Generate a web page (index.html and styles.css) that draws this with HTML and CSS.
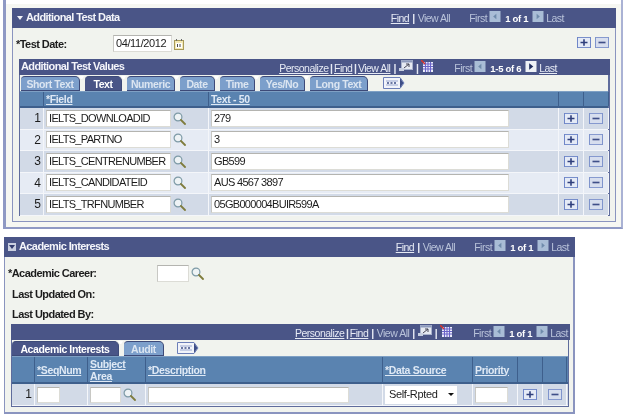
FILE: index.html
```html
<!DOCTYPE html>
<html lang="en">
<head>
<meta charset="utf-8">
<title>Additional Test Data</title>
<link rel="stylesheet" href="styles.css">
</head>
<body>
<svg class="defs" width="0" height="0" aria-hidden="true">
  <symbol id="mag" viewBox="0 0 13 13"><circle cx="5" cy="5" r="3.9" fill="#eef3f5" stroke="#7d9aa6" stroke-width="1.2"/><path d="M8 8l4 4" stroke="#7f7c3c" stroke-width="1.8" stroke-linecap="round"/></symbol>
  <symbol id="plus" viewBox="0 0 14 12" preserveAspectRatio="none"><rect x=".5" y=".5" width="13" height="11" fill="#e4eaf6" stroke="#6f86c8"/><path d="M7 2.500v7M3.500 6h7" stroke="#2f3f7c" stroke-width="1.600"/></symbol>
  <symbol id="minus" viewBox="0 0 14 12" preserveAspectRatio="none"><rect x=".5" y=".5" width="13" height="11" fill="#d7deee" stroke="#7f94cc"/><path d="M3.500 6h7" stroke="#3f4f88" stroke-width="1.800"/></symbol>
  <symbol id="left" viewBox="0 0 12 12"><rect width="12" height="12" fill="#a9bdd6"/><path d="M7.500 3v6L4 6z" fill="#6f8bab"/></symbol>
  <symbol id="right" viewBox="0 0 12 12"><rect width="12" height="12" fill="#a9bdd6"/><path d="M4.500 3v6L8 6z" fill="#6f8bab"/></symbol>
  <symbol id="rightOn" viewBox="0 0 12 12"><rect width="12" height="12" fill="#eef1f6"/><path d="M4 2.500v7L8.500 6z" fill="#1d2a5c"/></symbol>
  <symbol id="zoomwin" viewBox="0 0 14 12"><rect x="2.500" y=".5" width="11" height="9" fill="#e6eaf2" stroke="#a9b3cc"/><rect x="2.500" y=".5" width="11" height="2" fill="#8d9abc"/><path d="M5 8l5-4M7 4h3v3" stroke="#445" fill="none"/><rect y="8" width="5" height="3" fill="#c7cfe0"/></symbol>
  <symbol id="gridicon" viewBox="0 0 12 12"><rect x="2" y="2" width="10" height="10" fill="#eef0fa"/><path d="M2 4h10M2 6.500h10M2 9h10M4.500 2v10M7 2v10M9.500 2v10" stroke="#6a63c8" stroke-width="1.100"/><path d="M0 0l4 4" stroke="#d8342c" stroke-width="1.500"/></symbol>
  <symbol id="more" viewBox="0 0 23 12"><path d="M1.500.5H18l4 5.500-4 5.500H1.500z" fill="#f2f4fa" stroke="#6c7fb8"/><path d="M18 1l3.500 5-3.500 5z" fill="#3d4d86"/><path d="M4 4h12M4 8h12" stroke="#9aa8d0"/><path d="M5 6h2M8.500 6h2M12 6h2" stroke="#3d4d86" stroke-width="1.500"/></symbol>
  <symbol id="cal" viewBox="0 0 10 11"><rect x=".5" y="1.500" width="9" height="9" fill="#f4e9b4" stroke="#a89a58"/><rect x="2" y="4" width="6" height="5" fill="#fff"/><path d="M3.500 5v3M6 5v3" stroke="#4a4a4a"/><path d="M2.500 0v2M7.500 0v2" stroke="#6a6a6a"/></symbol>
</svg>

<div class="frame">
  <div class="frame-inner">
    <section class="panel panel-a">
      <header class="bar">
        <span class="arrow-down"></span>
        <h2 class="bar-title">Additional Test Data</h2>
        <nav class="nav nav-a">
          <a class="link">Find</a><span class="pipe">|</span><span class="dim">View All</span>
          <span class="dim first">First</span><svg class="nb"><use href="#left"/></svg><b class="count">1 of 1</b><svg class="nb"><use href="#right"/></svg><span class="dim">Last</span>
        </nav>
      </header>
      <div class="panel-body body-a">
        <div class="date-row">
          <label class="lbl lbl-date">*Test Date:</label>
          <div class="inp inp-date">04/11/2012</div>
          <svg class="cal"><use href="#cal"/></svg>
          <div class="row-btns top-btns"><svg class="btn"><use href="#plus"/></svg><svg class="btn"><use href="#minus"/></svg></div>
        </div>
        <div class="grid grid-a">
          <div class="grid-bar">
            <h3 class="grid-title">Additional Test Values</h3>
            <nav class="nav nav-ga">
              <a class="link">Personalize</a><span class="pipe tight">|</span><a class="link">Find</a><span class="pipe tight">|</span><a class="link">View All</a><span class="pipe">|</span><svg class="zw"><use href="#zoomwin"/></svg><span class="pipe">|</span><svg class="gi"><use href="#gridicon"/></svg>
              <span class="dim first-g">First</span><svg class="nb"><use href="#left"/></svg><b class="count">1-5 of 6</b><svg class="nb"><use href="#rightOn"/></svg><a class="link">Last</a>
            </nav>
          </div>
          <div class="tabs tabs-a">
            <div class="tab w-short">Short Text</div>
            <div class="tab on w-text">Text</div>
            <div class="tab w-num">Numeric</div>
            <div class="tab w-date">Date</div>
            <div class="tab w-time">Time</div>
            <div class="tab w-yes">Yes/No</div>
            <div class="tab last w-long">Long Text</div>
            <svg class="more more-a"><use href="#more"/></svg>
          </div>
          <div class="cols cols-a head head-a">
            <div class="hc"></div><div class="hc"><a class="hl">*Field</a></div><div class="hc"><a class="hl">Text - 50</a></div><div class="hc"></div><div class="hc"></div>
          </div>
          <div class="cols cols-a row odd">
            <div class="c num">1</div><div class="c"><div class="inp inp-field">IELTS_DOWNLOADID</div><svg class="mag"><use href="#mag"/></svg></div><div class="c"><div class="inp inp-text">279</div></div><div class="c cb"><svg class="btn"><use href="#plus"/></svg></div><div class="c cb"><svg class="btn"><use href="#minus"/></svg></div>
          </div>
          <div class="cols cols-a row even">
            <div class="c num">2</div><div class="c"><div class="inp inp-field">IELTS_PARTNO</div><svg class="mag"><use href="#mag"/></svg></div><div class="c"><div class="inp inp-text">3</div></div><div class="c cb"><svg class="btn"><use href="#plus"/></svg></div><div class="c cb"><svg class="btn"><use href="#minus"/></svg></div>
          </div>
          <div class="cols cols-a row odd">
            <div class="c num">3</div><div class="c"><div class="inp inp-field">IELTS_CENTRENUMBER</div><svg class="mag"><use href="#mag"/></svg></div><div class="c"><div class="inp inp-text">GB599</div></div><div class="c cb"><svg class="btn"><use href="#plus"/></svg></div><div class="c cb"><svg class="btn"><use href="#minus"/></svg></div>
          </div>
          <div class="cols cols-a row even">
            <div class="c num">4</div><div class="c"><div class="inp inp-field">IELTS_CANDIDATEID</div><svg class="mag"><use href="#mag"/></svg></div><div class="c"><div class="inp inp-text">AUS 4567 3897</div></div><div class="c cb"><svg class="btn"><use href="#plus"/></svg></div><div class="c cb"><svg class="btn"><use href="#minus"/></svg></div>
          </div>
          <div class="cols cols-a row odd">
            <div class="c num">5</div><div class="c"><div class="inp inp-field">IELTS_TRFNUMBER</div><svg class="mag"><use href="#mag"/></svg></div><div class="c"><div class="inp inp-text">05GB000004BUIR599A</div></div><div class="c cb"><svg class="btn"><use href="#plus"/></svg></div><div class="c cb"><svg class="btn"><use href="#minus"/></svg></div>
          </div>
        </div>
      </div>
    </section>
  </div>
</div>

<section class="panel panel-b">
  <header class="bar">
    <span class="toggle"></span>
    <h2 class="bar-title">Academic Interests</h2>
    <nav class="nav nav-b">
      <a class="link">Find</a><span class="pipe">|</span><span class="dim">View All</span>
      <span class="dim first">First</span><svg class="nb"><use href="#left"/></svg><b class="count">1 of 1</b><svg class="nb"><use href="#right"/></svg><span class="dim">Last</span>
    </nav>
  </header>
  <div class="panel-body body-b">
    <div class="field-row career">
      <label class="lbl lbl-career">*Academic Career:</label>
      <div class="inp inp-career"></div>
      <svg class="mag"><use href="#mag"/></svg>
    </div>
    <div class="lbl info">Last Updated On:</div>
    <div class="lbl info">Last Updated By:</div>
    <div class="grid grid-b">
      <div class="grid-bar">
        <nav class="nav nav-gb">
          <a class="link">Personalize</a><span class="pipe tight">|</span><a class="link">Find</a><span class="pipe">|</span><span class="dim">View All</span><span class="pipe">|</span><svg class="zw"><use href="#zoomwin"/></svg><span class="pipe">|</span><svg class="gi"><use href="#gridicon"/></svg>
          <span class="dim first-g">First</span><svg class="nb"><use href="#left"/></svg><b class="count">1 of 1</b><svg class="nb"><use href="#right"/></svg><span class="dim">Last</span>
        </nav>
      </div>
      <div class="tabs tabs-b">
        <div class="tab on w-acad">Academic Interests</div>
        <div class="tab last w-audit">Audit</div>
        <svg class="more more-b"><use href="#more"/></svg>
      </div>
      <div class="cols cols-b head head-b">
        <div class="hc"></div><div class="hc"><a class="hl">*SeqNum</a></div><div class="hc"><a class="hl">Subject<br>Area</a></div><div class="hc"><a class="hl">*Description</a></div><div class="hc"><a class="hl">*Data Source</a></div><div class="hc"><a class="hl">Priority</a></div><div class="hc"></div><div class="hc"></div>
      </div>
      <div class="cols cols-b row odd row-b">
        <div class="c num">1</div><div class="c"><div class="inp inp-seq"></div></div><div class="c"><div class="inp inp-subj"></div><svg class="mag"><use href="#mag"/></svg></div><div class="c"><div class="inp inp-desc"></div></div><div class="c"><div class="sel">Self-Rpted<span class="caret"></span></div></div><div class="c"><div class="inp inp-pri"></div></div><div class="c cb"><svg class="btn"><use href="#plus"/></svg></div><div class="c cb"><svg class="btn"><use href="#minus"/></svg></div>
      </div>
    </div>
  </div>
</section>
</body>
</html>
```

FILE: styles.css
```css
* { box-sizing: border-box; }
html, body { margin: 0; padding: 0; background: #fff; }
body {
  width: 627px;
  height: 418px;
  overflow: hidden;
  font: 11px/1.2 "Liberation Sans", Arial, sans-serif;
  color: #1c1c1c;
  filter: blur(.35px);
}
.defs { position: absolute; }
h2, h3 { margin: 0; }

.frame {
  margin-left: 3px;
  width: 620px;
  height: 229px;
  padding-top: 4px;
  border-left: 3px solid #8f99c4;
  border-right: 2px solid #aab2d4;
  border-bottom: 2px solid #8f99c4;
}
.frame-inner {
  height: 223px;
  padding: 4px 0 0 6px;
  background: #f6f7f2;
}

.panel { border: 1px solid #8a94bf; border-top: 0; background: #f1f3ee; }
.panel-a { width: 604px; height: 214px; }
.panel-b { margin: 8px 0 0 4px; width: 571px; height: 177px; border-right-width: 2px; border-bottom-width: 2px; }

.bar {
  display: flex;
  align-items: center;
  height: 20px;
  margin: 0 -1px;
  background: #4a5587;
  color: #fff;
}
.panel-b .bar { margin-right: -2px; }
.arrow-down {
  margin: 0 3px 0 5px;
  border: 3px solid transparent;
  border-top: 4px solid #f0f2f8;
  border-bottom: 0;
  width: 0;
}
.toggle {
  width: 8px;
  height: 8px;
  margin: 0 3px 0 4px;
  background: #c9cfe0;
  position: relative;
}
.toggle::after {
  content: "";
  position: absolute;
  left: 1px;
  top: 2px;
  border: 3px solid transparent;
  border-top: 4px solid #2f3a6c;
  border-bottom: 0;
}
.bar-title { font-size: 11px; font-weight: 700; letter-spacing: -.6px; color: #f4f5fa; }

.nav {
  display: flex;
  align-items: center;
  margin-left: auto;
  font-size: 10.5px;
  letter-spacing: -.5px;
  color: #e8ebf5;
  white-space: nowrap;
}
.nav-a { padding-right: 52px; }
.nav-b { padding-right: 6px; }
.link { color: #e6eaf4; text-decoration: underline; }
.pipe { margin: 0 3px; color: #e6eaf4; font-weight: 700; }
.pipe.tight { margin: 0 1.5px; }
.dim { color: #b9c3da; }
.first { margin-left: 19px; }
.first-g { margin-left: 21px; }
.nb { width: 12px; height: 11px; margin: -3px 2px 0 2px; }
.count { font-size: 9.5px; letter-spacing: -.3px; margin: 1px 2px 0 2px; color: #fff; }
.zw { width: 14px; height: 12px; margin-top: -4px; }
.gi { width: 12px; height: 12px; margin: -5px 0 0 0; }

.panel-body { display: block; }
.date-row {
  display: flex;
  align-items: center;
  height: 31px;
  padding-left: 3px;
}
.lbl { font-weight: 700; font-size: 11px; letter-spacing: -.55px; }
.lbl-date { width: 97px; margin-top: 2px; }
.inp {
  height: 17px;
  line-height: 15px;
  padding-left: 2px;
  background: #fff;
  border: 1px solid #dcdcd6;
  border-top-color: #b4b4b0;
  border-left-color: #c8c8c4;
  font-size: 11px;
  letter-spacing: -.68px;
  color: #1c1c1c;
  white-space: nowrap;
  overflow: hidden;
}
.inp-date { width: 59px; letter-spacing: -.4px; }
.cal { width: 10px; height: 11px; margin: 1px 0 0 2px; }
.top-btns { display: flex; gap: 4px; margin-left: auto; padding-right: 6px; margin-top: -3px; }
.btn { width: 14px; height: 11px; display: block; }

.grid { border: 1px solid #5f6c9c; border-top: 0; background: #fff; }
.grid-a { margin-left: 6px; width: 591px; height: 157px; border-width: 0 2px 2px 1px; }
.grid-bar {
  display: flex;
  align-items: center;
  height: 16px;
  margin: 0 -2px 0 -1px;
  background: #4a5587;
  color: #fff;
}
.grid-title { font-size: 11px; font-weight: 700; letter-spacing: -.6px; padding-left: 2px; color: #f4f5fa; }
.nav-ga { padding-right: 53px; margin-top: 2px; }
.nav-gb { padding-right: 2px; margin-top: 2px; }

.tabs {
  display: flex;
  align-items: flex-end;
  height: 16px;
  background: #f1f3ee;
}
.tab {
  position: relative;
  height: 15px;
  line-height: 14px;
  margin-right: 5px;
  text-align: center;
  font-size: 10.5px;
  letter-spacing: -.4px;
  font-weight: 700;
  color: #dbe5f1;
  background: #7c9fcb;
  border-top: 1px solid #3d4a78;
  border-right: 1px solid #3d4a78;
  border-bottom: 1px solid #3d4a78;
  border-radius: 4px 5px 0 0;
}
.tab.on { background: #495587; color: #fff; }
.tab::after {
  content: "";
  position: absolute;
  top: -1px;
  right: -5px;
  width: 5px;
  height: 3px;
  background: #fff;
  clip-path: polygon(0 0, 100% 0, 65% 100%, 35% 100%);
}
.tab.last::after { display: none; }
.tabs-a { padding-left: 1px; }
.w-short { width: 59px; }
.w-text { width: 37px; }
.w-num { width: 48px; }
.w-date { width: 35px; }
.w-time { width: 35px; }
.w-yes { width: 45px; }
.w-long { width: 58px; }
.w-acad { width: 107px; }
.w-audit { width: 40px; }
.more { width: 23px; height: 12px; align-self: center; }
.more-a { margin-left: 9px; }
.more-b { margin-left: 7px; }

.cols { display: grid; }
.cols-a { grid-template-columns: 24px 165px 350px 25px 25px; }
.head {
  background: #5a83b0;
  border-top: 1px solid #7fa0c4;
  border-bottom: 2px solid #3e5f8c;
}
.hc { border-right: 1px solid #3e5f8c; display: flex; align-items: center; padding-left: 2px; }
.head-a { height: 17px; }
.hl { color: #dfe9f5; font-size: 10.5px; letter-spacing: -.35px; font-weight: 700; text-decoration: underline; }
.row { height: 21.5px; border-bottom: 1px solid #f4f6fa; }
.odd { background: #d2dae7; }
.even { background: #e6ebf4; }
.c { display: flex; align-items: center; border-right: 1px solid #f4f6fa; padding-left: 2px; }
.num { justify-content: flex-end; padding-right: 2px; font-size: 12px; }
.cb { padding-left: 5px; }
.inp-field { width: 125px; }
.inp-text { width: 298px; }
.mag { width: 13px; height: 13px; margin-left: 2px; }

.body-b { padding: 0; }
.field-row { display: flex; align-items: center; height: 27px; padding: 5px 0 0 3px; }
.lbl-career { width: 149px; margin-top: 2px; }
.inp-career { width: 32px; }
.info { height: 20px; line-height: 20px; padding-left: 7px; }
.grid-b { margin-left: 6px; width: 558px; height: 83px; border-width: 0 1px 2px 1px; margin-top: 0; }
.tabs-b { padding-left: 0; }
.cols-b { grid-template-columns: 23px 53px 58px 237px 90px 45px 25px 24px; }
.head-b { height: 28px; }
.head-b .hc { align-items: center; line-height: 12px; }
.row-b { height: 22px; }
.inp-seq { width: 23px; height: 16px; }
.inp-subj { width: 31px; height: 16px; }
.inp-desc { width: 201px; height: 16px; }
.inp-pri { width: 33px; height: 16px; }
.sel {
  display: flex;
  align-items: center;
  justify-content: space-between;
  width: 72px;
  height: 18px;
  padding: 0 3px 0 4px;
  background: #fff;
  font-size: 11px;
  letter-spacing: -.35px;
}
.caret { border: 3px solid transparent; border-top: 3px solid #111; border-bottom: 0; }
```
